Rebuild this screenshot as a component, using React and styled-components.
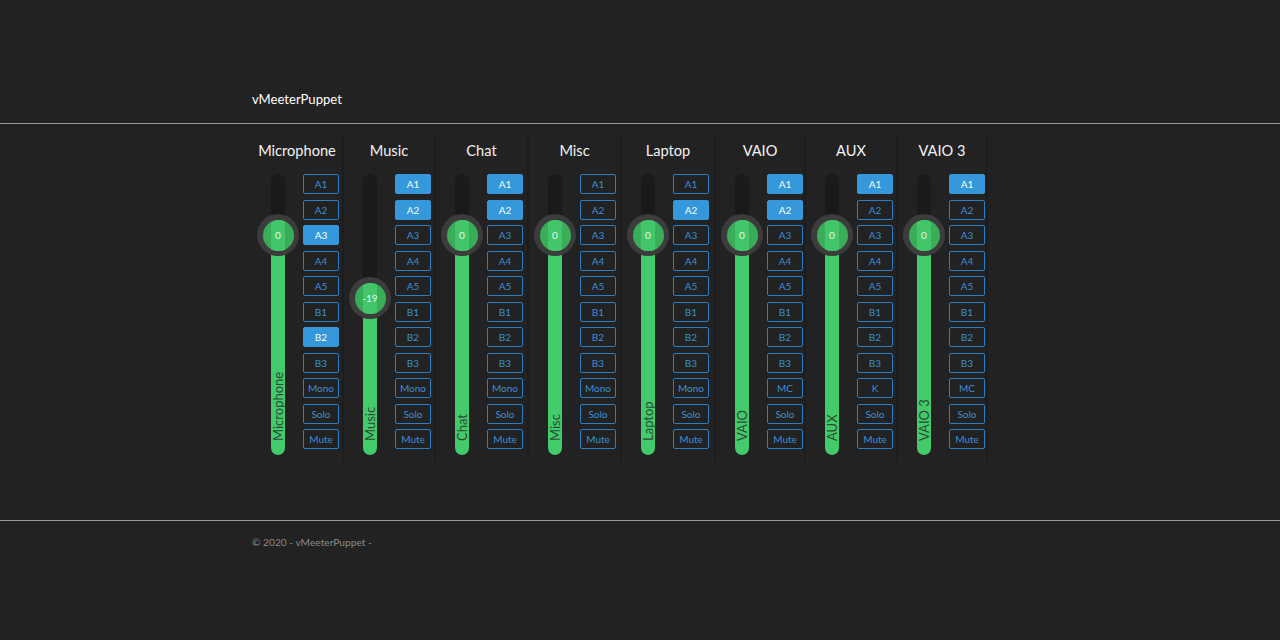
import React from 'react';
import styled, { createGlobalStyle } from 'styled-components';

const GlobalStyle = createGlobalStyle`
  html, body {
    margin: 0;
    background: #222222;
    font-family: Lato, "Open Sans", "Liberation Sans", sans-serif;
  }
`;

const strips = [
    { name: 'Microphone', value: 0, width: 92, active: ['A3', 'B2'], mono: 'Mono' },
    { name: 'Music', value: -19, width: 92, active: ['A1', 'A2'], mono: 'Mono' },
    { name: 'Chat', value: 0, width: 93, active: ['A1', 'A2'], mono: 'Mono' },
    { name: 'Misc', value: 0, width: 93, active: [], mono: 'Mono' },
    { name: 'Laptop', value: 0, width: 94, active: ['A2'], mono: 'Mono' },
    { name: 'VAIO', value: 0, width: 90, active: ['A1', 'A2'], mono: 'MC' },
    { name: 'AUX', value: 0, width: 92, active: ['A1'], mono: 'K' },
    { name: 'VAIO 3', value: 0, width: 90, active: ['A1'], mono: 'MC' },
];

const buses = ['A1', 'A2', 'A3', 'A4', 'A5', 'B1', 'B2', 'B3'];

const Page = styled.div`
  min-height: 640px;
  background: #222222;
`;

const Header = styled.header`
  height: 124px;
  box-sizing: border-box;
  border-bottom: 1px solid #9a9a9a;
  display: flex;
  align-items: flex-end;
  padding-bottom: 14px;
`;

const Container = styled.div`
  width: 776px;
  margin: 0 auto;
`;

const Brand = styled.div`
  color: #ffffff;
  font-size: 13.1px;
  line-height: 20px;
`;

const Main = styled.main`
  height: 396px;
  box-sizing: border-box;
  padding-top: 9px;
`;

const Board = styled.div`
  display: flex;
`;

const Strip = styled.div`
  width: ${props => props.w}px;
  box-sizing: border-box;
  border-right: 2px solid #1d1d1d;
  padding: 8px 0 7px 6px;
  display: flex;
  flex-direction: column;
`;

const Title = styled.div`
  color: #f2f2f2;
  font-size: 14.6px;
  line-height: 20px;
  text-align: center;
  margin-left: -6px;
  margin-bottom: 13px;
`;

const Row = styled.div`
  display: flex;
  gap: 5px;
`;

const SliderBox = styled.div`
  width: 40px;
  height: 281px;
  display: flex;
  justify-content: center;
`;

const Track = styled.div`
  position: relative;
  width: 14px;
  height: 100%;
  border-radius: 7px;
  background: #1a1a1a;
`;

const Fill = styled.div`
  position: absolute;
  left: 0;
  right: 0;
  bottom: 0;
  border-radius: 0 0 7px 7px;
  background: #43ca6b;
`;

const Knob = styled.div`
  position: absolute;
  left: 50%;
  width: 42px;
  height: 42px;
  margin: -21px 0 0 -21px;
  border-radius: 50%;
  background: #3c3c3c;
  display: flex;
  align-items: center;
  justify-content: center;
`;

const KnobFace = styled.div`
  position: relative;
  width: 31px;
  height: 31px;
  border-radius: 50%;
  background: #3aad58;
  overflow: hidden;
  display: flex;
  align-items: center;
  justify-content: center;
  &::before {
    content: '';
    position: absolute;
    top: 0;
    bottom: 0;
    left: 50%;
    width: 14px;
    margin-left: -7px;
    background: #43c66a;
  }
`;

const KnobValue = styled.span`
  position: relative;
  color: #e6f6ea;
  font-size: 10px;
`;

const VLabel = styled.div`
  position: absolute;
  left: 50%;
  bottom: 0;
  transform-origin: 0 0;
  transform: rotate(-90deg) translateY(-50%);
  white-space: nowrap;
  color: #2b4a34;
  font-size: 13px;
  line-height: 14px;
`;

const Buttons = styled.div`
  display: flex;
  flex-direction: column;
  gap: 5.5px;
`;

const Btn = styled.button`
  width: 36px;
  height: 20px;
  padding: 0;
  box-sizing: border-box;
  border: 1px solid ${props => props.on ? '#3498db' : '#2a7fc4'};
  border-radius: 2px;
  background: ${props => props.on ? '#3498db' : 'transparent'};
  color: ${props => props.on ? '#ffffff' : '#3b8fd6'};
  font-family: Lato, "Liberation Sans", sans-serif;
  font-size: 10px;
  line-height: 18px;
  text-align: center;
`;

const Footer = styled.footer`
  border-top: 1px solid #9a9a9a;
  padding-top: 14px;
`;

const Copy = styled.div`
  color: #8a8a8a;
  font-size: 10.2px;
  line-height: 14px;
`;

function knobTop(value) {
    return 61 + (-value) * 63 / 19;
}

function ChannelStrip({ strip }) {
    let top = knobTop(strip.value);
    let labels = [...buses, strip.mono, 'Solo', 'Mute'];
    return (
        <Strip w={strip.width}>
            <Title>{strip.name}</Title>
            <Row>
                <SliderBox>
                    <Track>
                        <Fill style={{ top: top }} />
                        <VLabel>{strip.name}</VLabel>
                        <Knob style={{ top: top }}>
                            <KnobFace>
                                <KnobValue>{strip.value}</KnobValue>
                            </KnobFace>
                        </Knob>
                    </Track>
                </SliderBox>
                <Buttons>
                    {labels.map((b, i) => (
                        <Btn key={i} on={strip.active.includes(b) ? 1 : 0}>{b}</Btn>
                    ))}
                </Buttons>
            </Row>
        </Strip>
    );
}

export default function App() {
    return (
        <Page>
            <GlobalStyle />
            <Header>
                <Container>
                    <Brand>vMeeterPuppet</Brand>
                </Container>
            </Header>
            <Main>
                <Container>
                    <Board>
                        {strips.map((s, i) => <ChannelStrip key={i} strip={s} />)}
                    </Board>
                </Container>
            </Main>
            <Footer>
                <Container>
                    <Copy>© 2020 - vMeeterPuppet -</Copy>
                </Container>
            </Footer>
        </Page>
    );
}
